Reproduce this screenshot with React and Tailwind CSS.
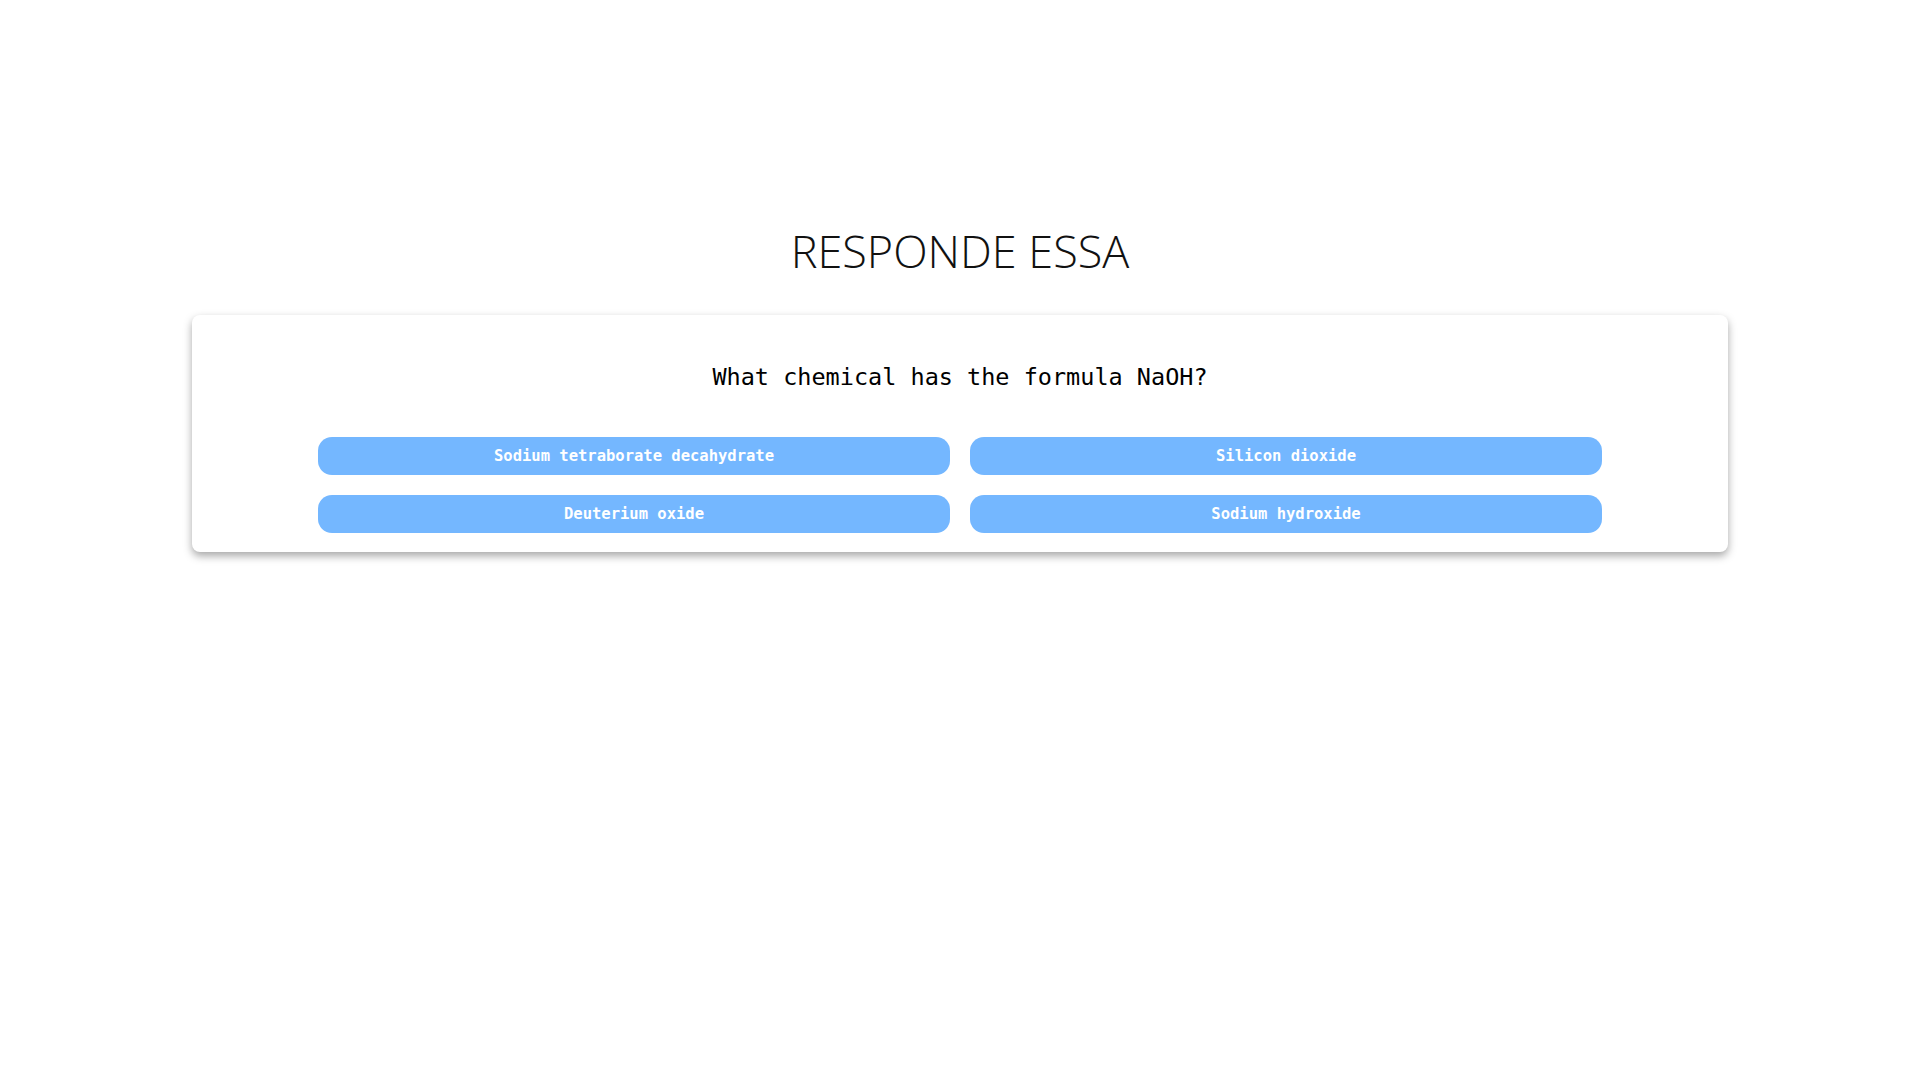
export default function App() {
  const answers = [
    "Sodium tetraborate decahydrate",
    "Silicon dioxide",
    "Deuterium oxide",
    "Sodium hydroxide",
  ];
  return (
    <div className="min-h-screen w-full bg-white">
      <h1
        className="pt-[219px] text-center text-[45px] leading-[63px] font-light text-[#111]"
        style={{ fontFamily: '"Open Sans", "Noto Sans", sans-serif' }}
      >
        RESPONDE ESSA
      </h1>
      <div className="mx-auto mt-[33px] w-[1536px] rounded-lg bg-white shadow-[0_4px_8px_rgba(0,0,0,0.35)] pt-[47px] pb-[19px]">
        <p
          className="text-center text-[23.5px] leading-[30px] text-black"
          style={{ fontFamily: '"DejaVu Sans Mono", "Liberation Mono", monospace' }}
        >
          What chemical has the formula NaOH?
        </p>
        <div className="mx-auto mt-[45px] grid w-[1284px] grid-cols-2 gap-5">
          {answers.map((a) => (
            <button
              key={a}
              className="h-[38px] rounded-[14px] bg-[#74b7ff] pt-[2px] text-[15.5px] font-bold text-white"
              style={{ fontFamily: '"DejaVu Sans Mono", "Liberation Mono", monospace' }}
            >
              {a}
            </button>
          ))}
        </div>
      </div>
    </div>
  );
}
